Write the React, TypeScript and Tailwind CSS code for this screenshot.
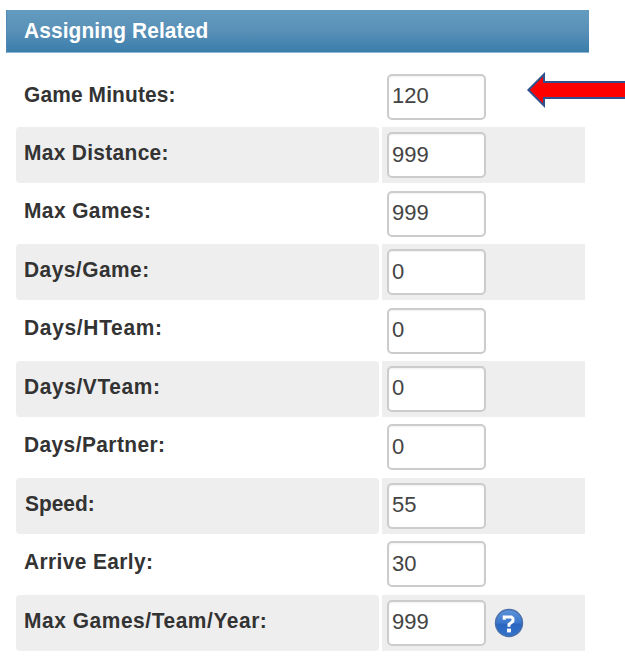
import React from "react"

const fields = [
  { label: "Game Minutes:", value: "120", tracking: "tracking-[0.15px]" },
  { label: "Max Distance:", value: "999", tracking: "tracking-[0.35px]" },
  { label: "Max Games:", value: "999", tracking: "tracking-[0.45px]" },
  { label: "Days/Game:", value: "0", tracking: "tracking-[0.5px]" },
  { label: "Days/HTeam:", value: "0", tracking: "tracking-[0.75px]" },
  { label: "Days/VTeam:", value: "0", tracking: "tracking-[0.65px]" },
  { label: "Days/Partner:", value: "0", tracking: "tracking-[0.45px]" },
  { label: "Speed:", value: "55", tracking: "ml-px tracking-[0px]" },
  { label: "Arrive Early:", value: "30", tracking: "tracking-[0.4px]" },
  {
    label: "Max Games/Team/Year:",
    value: "999",
    tracking: "tracking-[0.6px]",
    help: true
  }
]

function HelpIcon() {
  return (
    <svg width="30" height="30" viewBox="0 0 30 30" className="ml-2">
      <defs>
        <linearGradient id="help" x1="0" y1="0" x2="0" y2="1">
          <stop offset="0" stopColor="#5c93da" />
          <stop offset="0.5" stopColor="#3a76cc" />
          <stop offset="0.55" stopColor="#2a66c0" />
          <stop offset="1" stopColor="#3472cc" />
        </linearGradient>
      </defs>
      <circle cx="15" cy="15" r="13.5" fill="url(#help)" stroke="#4c70ab" strokeWidth="1.4" />
      <path
        d="M10.2 11.8V8.9H17.4L18.9 10.4V13.3L15 16.3V18.8"
        fill="none"
        stroke="#fff"
        strokeWidth="3"
      />
      <rect x="13" y="20.6" width="4" height="3.8" fill="#fff" />
    </svg>
  )
}

function Arrow() {
  return (
    <svg
      width="98"
      height="38"
      viewBox="0 0 98 38"
      className="absolute right-0 top-[71px]"
    >
      <path
        d="M1.4 19L17 3.4V11H102V27H17V34.6L1.4 19Z"
        fill="#ff0000"
        stroke="#2f528f"
        strokeWidth="2"
      />
    </svg>
  )
}

function App() {
  return (
    <main className="relative h-[660px] w-[625px] overflow-hidden bg-white font-['Liberation_Sans',Arial,sans-serif]">
      <div className="pt-2.5 pl-1.5">
        <h2 className="flex h-[43px] w-[583px] items-center border-b border-l border-b-[#8db4d0] border-l-[#5089b3] bg-linear-to-b from-[#649bc0] via-[#5890b7] to-[#3a7dab] pb-0.5 pl-[17px] text-[22px] font-bold text-white">
          <span className="origin-left scale-x-95 tracking-[0.12px]">
            Assigning Related
          </span>
        </h2>
      </div>
      <div className="flex flex-col gap-[2.05px] pt-[15.6px] pl-[16.4px]">
        {fields.map((item) => (
          <div
            key={item.label}
            className="group flex h-[56.4px] gap-[2.4px] text-[#333]"
          >
            <div className="w-[363px] rounded-[4px] pt-[11px] pl-[7.5px] text-[22px] leading-[30px] font-bold group-even:bg-[#eee]">
              <span
                className={`inline-block origin-left scale-x-95 whitespace-nowrap ${item.tracking}`}
              >
                {item.label}
              </span>
            </div>
            <div className="flex w-[203.6px] items-center pl-[5.2px] group-even:bg-[#eee]">
              <input
                type="text"
                defaultValue={item.value}
                className="h-[46px] w-[99px] rounded-[5px] border-2 border-[#ccc] bg-white pb-px pl-[3px] text-[22px] text-[#444] shadow-[inset_0_1px_2px_rgba(0,0,0,0.06)]"
              />
              {item.help && <HelpIcon />}
            </div>
          </div>
        ))}
      </div>
      <Arrow />
    </main>
  )
}

export default App
